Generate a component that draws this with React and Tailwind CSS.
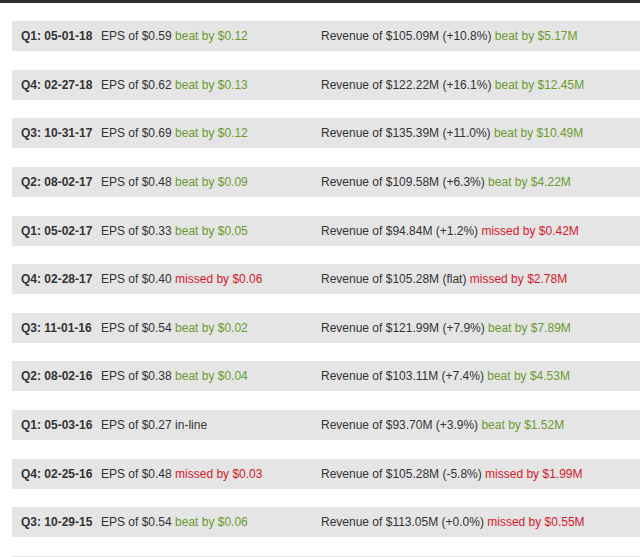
const rows = [
  ["Q1: 05-01-18", "$0.59", ["beat", "$0.12"], "$105.09M (+10.8%)", ["beat", "$5.17M"]],
  ["Q4: 02-27-18", "$0.62", ["beat", "$0.13"], "$122.22M (+16.1%)", ["beat", "$12.45M"]],
  ["Q3: 10-31-17", "$0.69", ["beat", "$0.12"], "$135.39M (+11.0%)", ["beat", "$10.49M"]],
  ["Q2: 08-02-17", "$0.48", ["beat", "$0.09"], "$109.58M (+6.3%)", ["beat", "$4.22M"]],
  ["Q1: 05-02-17", "$0.33", ["beat", "$0.05"], "$94.84M (+1.2%)", ["missed", "$0.42M"]],
  ["Q4: 02-28-17", "$0.40", ["missed", "$0.06"], "$105.28M (flat)", ["missed", "$2.78M"]],
  ["Q3: 11-01-16", "$0.54", ["beat", "$0.02"], "$121.99M (+7.9%)", ["beat", "$7.89M"]],
  ["Q2: 08-02-16", "$0.38", ["beat", "$0.04"], "$103.11M (+7.4%)", ["beat", "$4.53M"]],
  ["Q1: 05-03-16", "$0.27", ["inline"], "$93.70M (+3.9%)", ["beat", "$1.52M"]],
  ["Q4: 02-25-16", "$0.48", ["missed", "$0.03"], "$105.28M (-5.8%)", ["missed", "$1.99M"]],
  ["Q3: 10-29-15", "$0.54", ["beat", "$0.06"], "$113.05M (+0.0%)", ["missed", "$0.55M"]],
  ["", "", null, "", null],
];

function Result({ r }) {
  if (!r) return null;
  if (r[0] === "inline") return <span> in-line</span>;
  if (r[0] === "beat")
    return <span className="text-[#6b9a2e]"> beat by {r[1]}</span>;
  return <span className="text-[#d8182a]"> missed by {r[1]}</span>;
}

export default function App() {
  return (
    <div
      className="w-[640px] h-[557px] overflow-hidden bg-white"
      style={{ fontFamily: '"Liberation Sans", Arial, sans-serif' }}
    >
      <div className="h-[3px] bg-[#2e2e2e]" />
      <div className="flex flex-col gap-[18.64px] pt-[18px] pl-[12px]">
        {rows.map((row, i) => (
          <div
            key={i}
            className="flex items-center h-[30px] shrink-0 bg-[#e5e5e5] pl-[9px] text-[12px] text-[#333333] whitespace-nowrap"
          >
            {row[0] && (
              <>
                <span className="w-[80px] font-bold">{row[0]}</span>
                <span className="w-[220px]">
                  EPS of {row[1]}
                  <Result r={row[2]} />
                </span>
                <span>
                  Revenue of {row[3]}
                  <Result r={row[4]} />
                </span>
              </>
            )}
          </div>
        ))}
      </div>
    </div>
  );
}
